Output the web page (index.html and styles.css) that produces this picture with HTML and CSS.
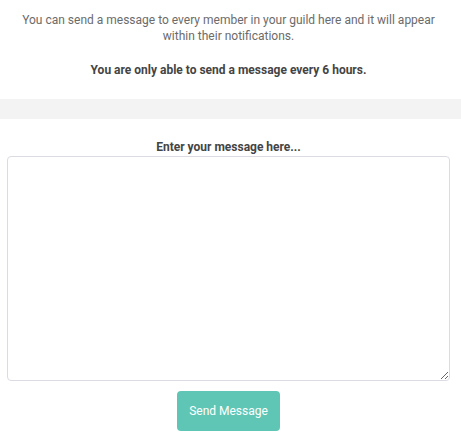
FILE: index.html
```html
<!DOCTYPE html>
<html lang="en">
<head>
<meta charset="UTF-8">
<meta name="viewport" content="width=device-width, initial-scale=1.0">
<title>Guild Message</title>
<link rel="stylesheet" href="styles.css">
</head>
<body>
<div class="intro">
  <p class="intro-text">You can send a message to every member in your guild here and it will appear within their notifications.</p>
  <p class="intro-warning">You are only able to send a message every 6 hours.</p>
</div>

<div class="divider"></div>

<!-- Message form -->
<form class="message-form" onsubmit="return false;">
  <label for="guildMessage" class="message-label">Enter your message here...</label>
  <textarea id="guildMessage" class="message-input"></textarea>
  <button type="submit" class="send-button">Send Message</button>
</form>
</body>
</html>
```

FILE: styles.css
```css
/* General page styles */
body {
  margin: 0;
  font-family: Roboto, "Liberation Sans", Arial, sans-serif;
  font-size: 12px;
  line-height: 16px;
  color: #6b6b6b;
  background-color: #fff;
}

/* Intro text at the top */
.intro {
  padding: 12px 11px 0 7px;
  text-align: center;
}

.intro-text {
  margin: 0;
}

.intro-warning {
  margin: 18px 0 0;
  font-weight: bold;
  color: #444;
}

/* Gray band between sections */
.divider {
  height: 20px;
  margin-top: 21px;
  background-color: #f3f3f3;
}

/* Message form */
.message-form {
  display: flex;
  flex-direction: column;
  align-items: center;
  padding: 20px 11px 0 7px;
}

.message-label {
  font-weight: bold;
  color: #444;
  margin-bottom: 1px;
}

.message-input {
  box-sizing: border-box;
  width: 100%;
  height: 225px;
  border: 1px solid #dddbe2;
  border-radius: 4px;
  resize: vertical;
  font-family: inherit;
  font-size: 12px;
}

.send-button {
  margin-top: 10px;
  width: 103px;
  height: 40px;
  border: none;
  border-radius: 4px;
  background-color: #5fc6b5;
  color: #fff;
  font-family: inherit;
  font-size: 12px;
  cursor: pointer;
}
```
